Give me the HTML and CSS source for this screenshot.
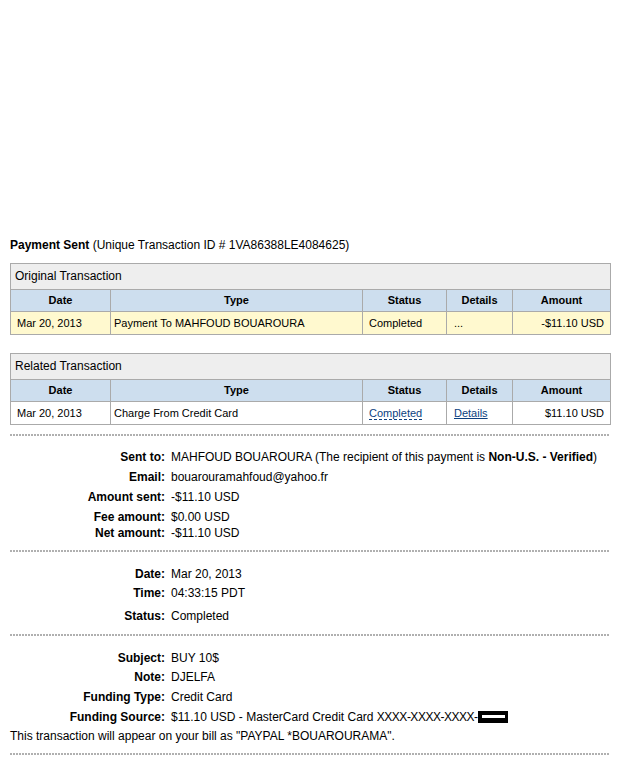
FILE: index.html
```html
<!DOCTYPE html>
<html>
<head>
<meta charset="utf-8">
<link rel="stylesheet" href="styles.css">
</head>
<body>
<div class="page">
  <p class="heading"><b>Payment Sent</b> (Unique Transaction ID # 1VA86388LE4084625)</p>

  <table class="txn">
    <colgroup><col class="c-date"><col class="c-type"><col class="c-status"><col class="c-details"><col class="c-amount"></colgroup>
    <tr class="title"><td colspan="5">Original Transaction</td></tr>
    <tr class="head"><th>Date</th><th>Type</th><th>Status</th><th>Details</th><th>Amount</th></tr>
    <tr class="data hl"><td>Mar 20, 2013</td><td class="type">Payment To MAHFOUD BOUAROURA</td><td>Completed</td><td class="det">...</td><td class="amt">-$11.10 USD</td></tr>
  </table>

  <table class="txn second">
    <colgroup><col class="c-date"><col class="c-type"><col class="c-status"><col class="c-details"><col class="c-amount"></colgroup>
    <tr class="title"><td colspan="5">Related Transaction</td></tr>
    <tr class="head"><th>Date</th><th>Type</th><th>Status</th><th>Details</th><th>Amount</th></tr>
    <tr class="data"><td>Mar 20, 2013</td><td class="type">Charge From Credit Card</td><td><a class="dash" href="#">Completed</a></td><td class="det"><a class="link" href="#">Details</a></td><td class="amt">$11.10 USD</td></tr>
  </table>

  <div class="rule first-rule"></div>
  <div class="section s1">
    <div class="row"><span class="lbl">Sent to:</span><span>MAHFOUD BOUAROURA (The recipient of this payment is <b>Non-U.S. - Verified</b>)</span></div>
    <div class="row"><span class="lbl">Email:</span><span>bouarouramahfoud@yahoo.fr</span></div>
    <div class="row"><span class="lbl">Amount sent:</span><span>-$11.10 USD</span></div>
    <div class="row"><span class="lbl">Fee amount:</span><span>$0.00 USD</span></div>
    <div class="row tight"><span class="lbl">Net amount:</span><span>-$11.10 USD</span></div>
  </div>
  <div class="rule"></div>
  <div class="section s2">
    <div class="row"><span class="lbl">Date:</span><span>Mar 20, 2013</span></div>
    <div class="row m5"><span class="lbl">Time:</span><span>04:33:15 PDT</span></div>
    <div class="row m9"><span class="lbl">Status:</span><span>Completed</span></div>
  </div>
  <div class="rule"></div>
  <div class="section s3">
    <div class="row"><span class="lbl">Subject:</span><span>BUY 10$</span></div>
    <div class="row m5"><span class="lbl">Note:</span><span>DJELFA</span></div>
    <div class="row"><span class="lbl">Funding Type:</span><span>Credit Card</span></div>
    <div class="row"><span class="lbl">Funding Source:</span><span>$11.10 USD - MasterCard Credit Card <span class="xs">XXXX-XXXX-XXXX-</span><span class="redact"><span class="bar"></span></span></span></div>
    <p class="bill">This transaction will appear on your bill as "PAYPAL *BOUAROURAMA".</p>
  </div>
  <div class="rule"></div>
</div>
</body>
</html>
```

FILE: styles.css
```css
body {
  margin: 0;
  font-family: "Liberation Sans", Arial, sans-serif;
  color: #000;
  background: #fff;
}
.page {
  padding: 238px 0 0 10px;
  width: 600px;
}
.heading {
  margin: 0;
  font-size: 12px;
  line-height: 14px;
}
.txn {
  margin-top: 11px;
  width: 600px;
  border-collapse: collapse;
  table-layout: fixed;
  font-size: 11px;
  line-height: 13px;
}
.txn.second { margin-top: 18px; }
.c-date { width: 100px; }
.c-type { width: 252px; }
.c-status { width: 84px; }
.c-details { width: 66px; }
.c-amount { width: 98px; }
.txn td, .txn th {
  border: 1px solid #aaaaaa;
  padding: 0 6px;
  white-space: nowrap;
}
.title td {
  background: #eeeeee;
  font-size: 12px;
  height: 25px;
  padding: 0 4px;
  text-align: left;
}
.head th {
  background: #cddeee;
  height: 21px;
  font-weight: bold;
  text-align: center;
}
.data td {
  height: 22px;
  text-align: left;
}
.data td.type { padding-left: 3px; }
.data td.det { padding-left: 7px; }
.data.hl td { background: #fff9cf; }
.data td.amt { text-align: right; }
.dash {
  color: #0b3f7f;
  text-decoration: none;
  border-bottom: 1px dashed #0b3f7f;
}
.link {
  color: #0b3f7f;
  text-decoration: underline;
}
.rule {
  height: 2px;
  background: repeating-linear-gradient(to right, #b0b0b0 0 2px, transparent 2px 3px);
}
.first-rule { margin-top: 9px; }
.section {
  font-size: 12px;
  line-height: 14px;
}
.s1 { padding: 14px 0 10px; }
.s2 { padding: 15px 0 11px; }
.s3 { padding: 15px 0 10px; }
.row {
  display: grid;
  grid-template-columns: 155px 1fr;
  column-gap: 6px;
  margin-top: 6px;
}
.row:first-child { margin-top: 0; }
.row.tight { margin-top: 2px; }
.row.m5 { margin-top: 5px; }
.row.m9 { margin-top: 9px; }
.lbl {
  text-align: right;
  font-weight: bold;
}
.xs { letter-spacing: -0.5px; }
.redact {
  display: inline-block;
  width: 30px;
  height: 12px;
  background: #000;
  vertical-align: -2px;
  margin-left: 1px;
}
.bar {
  display: block;
  width: 23px;
  height: 3px;
  margin: 4px auto 0;
  background: #fff;
}
.bill {
  margin: 5px 0 0;
}
```
